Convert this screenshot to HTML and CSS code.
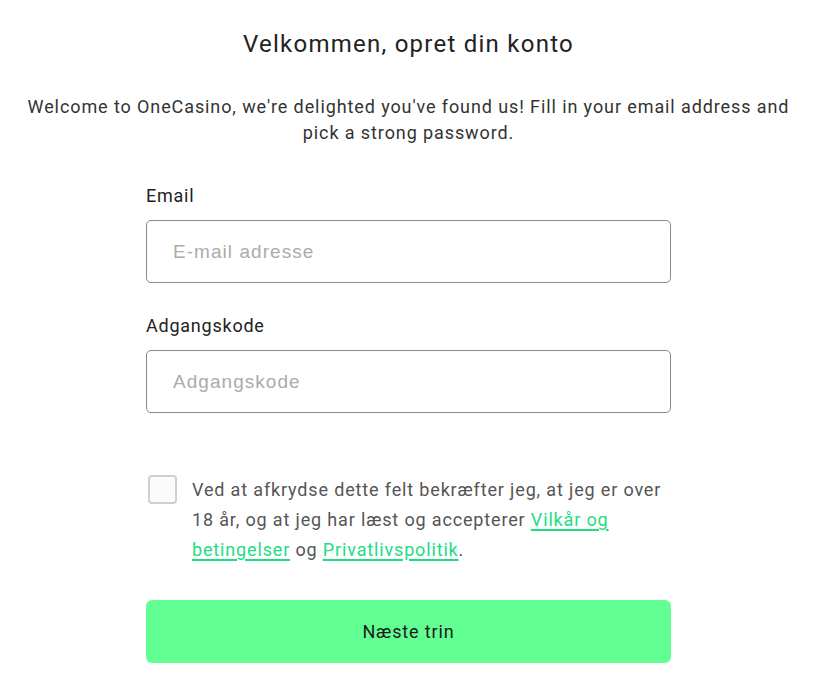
FILE: index.html
```html
<!DOCTYPE html>
<html lang="da">
<head>
<meta charset="utf-8">
<title>Opret konto</title>
<link rel="stylesheet" href="styles.css">
</head>
<body>
<main class="page">
  <h1 class="title">Velkommen, opret din konto</h1>
  <p class="intro">Welcome to OneCasino, we're delighted you've found us! Fill in your email address and pick a strong password.</p>
  <form class="form">
    <label class="label" for="email">Email</label>
    <input class="field" id="email" type="email" placeholder="E-mail adresse">
    <label class="label label-second" for="pw">Adgangskode</label>
    <input class="field" id="pw" type="password" placeholder="Adgangskode">
    <div class="consent">
      <span class="box"></span>
      <p class="consent-text">Ved at afkrydse dette felt bekræfter jeg, at jeg er over 18 år, og at jeg har læst og accepterer <a href="#" class="link">Vilkår og betingelser</a> og <a href="#" class="link">Privatlivspolitik</a>.</p>
    </div>
    <button type="button" class="submit">Næste trin</button>
  </form>
</main>
</body>
</html>
```

FILE: styles.css
```css
html, body {
  margin: 0;
  padding: 0;
  background: #ffffff;
}
body {
  font-family: Roboto, "Liberation Sans", sans-serif;
  letter-spacing: 0.048em;
}
.page {
  padding: 28px 3px 0 0;
  display: flex;
  flex-direction: column;
  align-items: center;
}
.title {
  margin: 0;
  font-size: 24px;
  line-height: 32px;
  font-weight: 400;
  letter-spacing: 0.052em;
  color: #222222;
  text-align: center;
}
.intro {
  margin: 34px 0 0 0;
  font-size: 18px;
  line-height: 26px;
  letter-spacing: 0.05em;
  color: #333333;
  text-align: center;
  padding: 0 20px;
}
.form {
  width: 525px;
  margin-top: 38px;
  display: flex;
  flex-direction: column;
}
.label {
  font-size: 18px;
  line-height: 24px;
  color: #222222;
  margin-bottom: 12px;
}
.label-second {
  margin-top: 31px;
}
.field {
  box-sizing: border-box;
  height: 63px;
  width: 100%;
  border: 1px solid #8a8a8a;
  border-radius: 5px;
  padding: 0 26px;
  font-family: "Liberation Sans", Arial, sans-serif;
  font-size: 19px;
  letter-spacing: 0.055em;
  color: #333;
  background: #fff;
  outline: none;
}
.field::placeholder {
  color: #ababab;
}
.consent {
  margin-top: 62px;
  display: flex;
  align-items: flex-start;
  gap: 15px;
  padding-left: 2px;
}
.box {
  flex: none;
  box-sizing: border-box;
  width: 29px;
  height: 29px;
  border: 2px solid #cfcfcf;
  border-radius: 4px;
  background: #fbfbfb;
}
.consent-text {
  margin: 0;
  font-size: 18px;
  line-height: 30px;
  letter-spacing: 0.047em;
  color: #555555;
}
.link {
  color: #22dc84;
  text-decoration: underline;
  text-decoration-thickness: 2px;
  text-underline-offset: 3px;
}
.submit {
  margin-top: 35px;
  height: 63px;
  border: none;
  border-radius: 6px;
  background: #62ff93;
  color: #1c1c1c;
  font-family: Roboto, "Liberation Sans", sans-serif;
  font-size: 18px;
  letter-spacing: 0.048em;
  cursor: pointer;
}
```
